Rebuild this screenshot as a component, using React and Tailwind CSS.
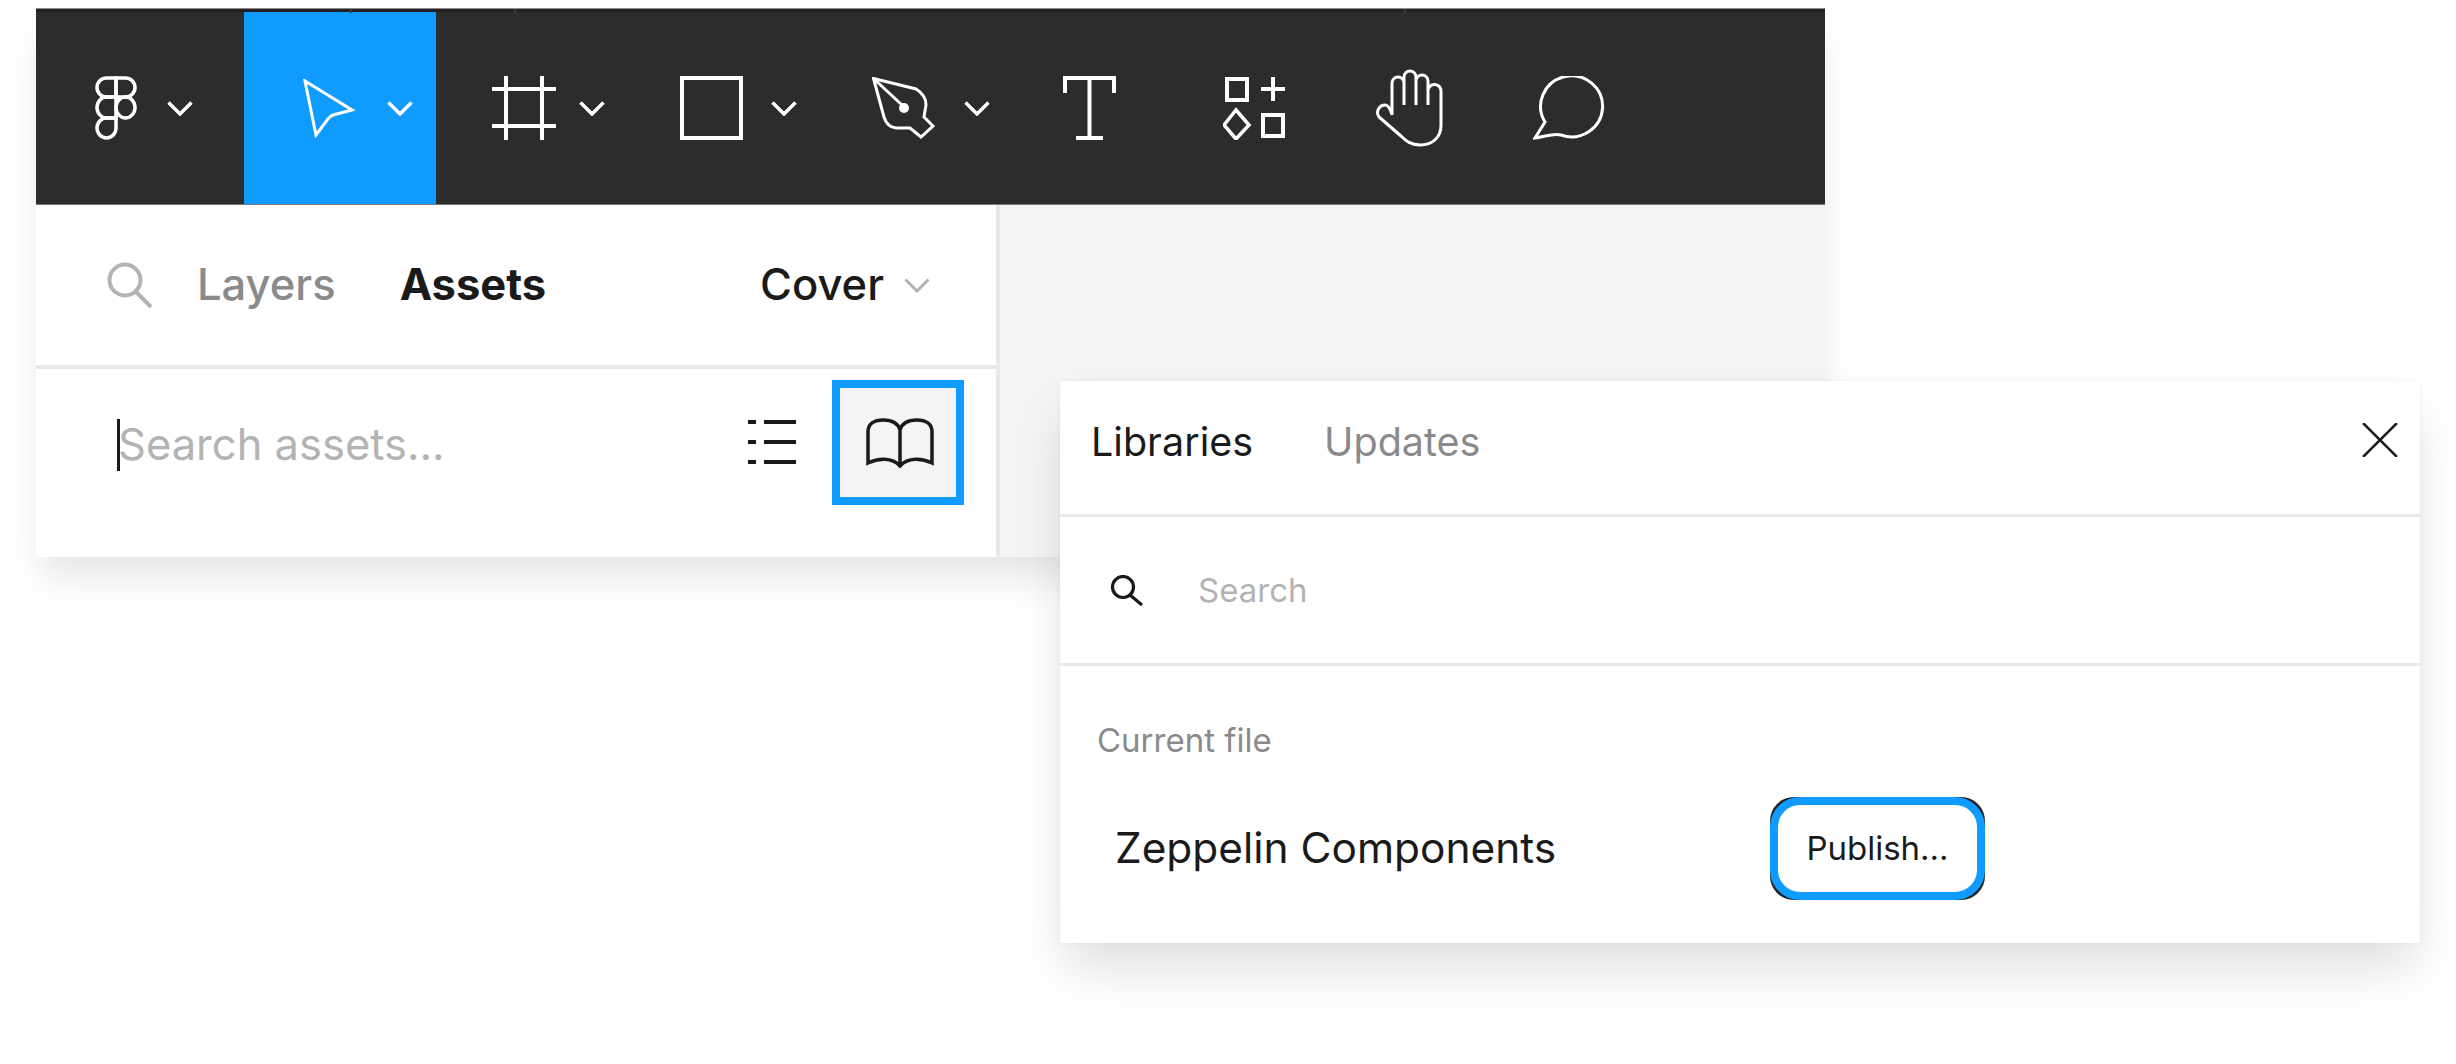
const Chevron = ({ color = 'white', w = 26, h = 15, sw = 3.5 }) => (
  <svg width={w} height={h} viewBox="0 0 26 15" fill="none" stroke={color} strokeWidth={sw} className="shrink-0">
    <path d="M1.5 1.5 L13 13 L24.5 1.5" />
  </svg>
);

const FigmaLogo = () => (
  <svg width="42" height="64" viewBox="0 0 42 64" fill="none" stroke="white" strokeWidth="3.5" className="shrink-0">
    <path d="M21 2 H11.5 a9.5 9.5 0 0 0 0 19 H21 Z" />
    <path d="M21 2 H30.5 a9.5 9.5 0 0 1 0 19 H21 Z" />
    <path d="M21 21 H11.5 a9.5 10.5 0 0 0 0 21 H21 Z" />
    <ellipse cx="30.5" cy="31.5" rx="9.5" ry="10.5" />
    <path d="M21 42 H11.5 a9.5 10 0 1 0 9.5 10 Z" />
  </svg>
);

const Cursor = () => (
  <svg width="52" height="59" viewBox="0 0 52 59" fill="none" stroke="white" strokeWidth="3" className="shrink-0">
    <path d="M2 2 L49 31 L30 36 Q27 37 25 40 L13 56 Z" strokeLinejoin="miter" />
  </svg>
);

const FrameIcon = () => (
  <svg width="64" height="64" viewBox="0 0 64 64" fill="none" stroke="white" strokeWidth="4" className="shrink-0">
    <path d="M14 0 V64 M50 0 V64 M0 13 H64 M0 50 H64" />
  </svg>
);

const Pen = () => (
  <svg width="63" height="63" viewBox="0 0 63 63" fill="none" stroke="white" strokeWidth="3" className="shrink-0">
    <path d="M1.5 1.5 L44 12 Q54 18 54 28 L52 40 L61 49 L49 60 L38 51 L24 51 Q15 50 12 40 Z" />
    <path d="M1.5 1.5 L30 28" />
    <circle cx="32" cy="31" r="5" fill="white" stroke="none" />
  </svg>
);

const TextIcon = () => (
  <svg width="53" height="64" viewBox="0 0 53 64" fill="none" stroke="white" strokeWidth="4" className="shrink-0">
    <path d="M2 17 V2 H51 V17 M26.5 2 V62 M13 62 H40" />
  </svg>
);

const Components = () => (
  <svg width="62" height="63" viewBox="-2 0 62 63" fill="none" stroke="white" strokeWidth="4" className="shrink-0">
    <rect x="2" y="2" width="20" height="21" />
    <path d="M48 0 V24 M36 12 H60" />
    <path d="M11 33 L24 48 L11 62 L-1 48 Z" strokeWidth="3.5" />
    <rect x="38" y="38" width="20" height="21" />
  </svg>
);

const Hand = () => (
  <svg width="68" height="78" viewBox="0 0 68 78" fill="none" stroke="white" strokeWidth="3" className="shrink-0">
    <path d="M17 46 V14 a6 6 0 0 1 12 0 V36 M29 36 V8 a6 6 0 0 1 12 0 V36 M41 36 V12 a6 6 0 0 1 12 0 V36 M53 36 V22 a6.5 6.5 0 0 1 13 0 V56 C66 68 58 76 45 76 C36 76 31 72 26 67 L4 48 C0 42 5 36 10 36 C13 36 15 38 17 46" strokeLinejoin="round" />
  </svg>
);

const Comment = () => (
  <svg width="72" height="64" viewBox="0 0 72 64" fill="none" stroke="white" strokeWidth="3" className="shrink-0">
    <path d="M2 62 L12 46 A31 30.5 0 1 1 28 59 C20 57 11 61 2 62 Z" />
  </svg>
);

export default function App() {
  return (
    <div className="relative w-[2456px] h-[1064px] overflow-hidden bg-white pt-[8px] pl-[36px] font-['Inter',sans-serif]">
      {/* main window */}
      <div className="w-[1789px] h-[549px] bg-[#f4f4f4] shadow-[0_25px_35px_-5px_rgba(0,0,0,0.1)]">
        {/* toolbar */}
        <div className="relative h-[197px] bg-[#2c2c2c] border-t border-[#8c8c8c]">
          <div className="h-[3px] bg-[#222222]" />
          <div className="absolute top-0 left-[314px] w-[2px] h-[4px] bg-[#3c3c3c]" />
          <div className="absolute top-0 left-[478px] w-[2px] h-[4px] bg-[#3c3c3c]" />
          <div className="absolute top-0 left-[1368px] w-[2px] h-[4px] bg-[#3c3c3c]" />
          <div className="flex items-center h-[192px]">
            <div className="flex items-center w-[208px] h-full pl-[59px] gap-[30px]">
              <FigmaLogo />
              <Chevron />
            </div>
            <div className="flex items-center w-[192px] h-full pl-[59px] gap-[32px] bg-[#0f9bff]">
              <Cursor />
              <Chevron />
            </div>
            <div className="flex items-center pl-[56px] gap-[23px]">
              <FrameIcon />
              <Chevron />
            </div>
            <div className="flex items-center pl-[75px] gap-[28px]">
              <div className="w-[63px] h-[64px] border-4 border-white shrink-0" />
              <Chevron />
            </div>
            <div className="flex items-center pl-[75px] gap-[29px]">
              <Pen />
              <Chevron />
            </div>
            <div className="ml-[73px]"><TextIcon /></div>
            <div className="ml-[107px]"><Components /></div>
            <div className="ml-[90px]"><Hand /></div>
            <div className="ml-[90px]"><Comment /></div>
          </div>
          <div className="absolute bottom-0 left-0 right-0 h-px bg-[#7a7a7a]" />
        </div>

        {/* left panel */}
        <div className="w-[964px] h-[352px] bg-white border-r-4 border-[#e8e8e8]">
          <div className="flex items-center h-[160px] pl-[71px] pr-[66px] border-b-4 border-[#e8e8e8] box-content">
            <svg width="46" height="46" viewBox="0 0 46 46" fill="none" stroke="#b3b3b3" strokeWidth="4" className="shrink-0">
              <circle cx="18" cy="18" r="15.5" />
              <path d="M29 30 L44 45" />
            </svg>
            <span className="ml-[44px] text-[43.5px] font-medium text-[#8a8a8a] leading-none">Layers</span>
            <span className="ml-[64px] text-[43.5px] font-bold text-[#1a1a1a] leading-none">Assets</span>
            <span className="ml-auto text-[43.5px] font-medium text-[#1a1a1a] leading-none">Cover</span>
            <div className="ml-[20px]"><Chevron color="#b3b3b3" sw={3} /></div>
          </div>
          <div className="flex items-start pl-[81px] pr-[32px] pt-[11px]">
            <div className="flex items-center h-[125px] mt-[2px]">
              <div className="w-[3px] h-[52px] bg-[#1a1a1a]" />
              <span className="-ml-[2px] text-[43.5px] text-[#b3b3b3] leading-none">Search assets...</span>
            </div>
            <div className="ml-auto mt-[40px] flex flex-col gap-[16px] w-[48px]">
              <div className="flex gap-[8px]"><div className="w-[8px] h-[4px] bg-[#1a1a1a]" /><div className="w-[32px] h-[4px] bg-[#1a1a1a]" /></div>
              <div className="flex gap-[8px]"><div className="w-[8px] h-[4px] bg-[#1a1a1a]" /><div className="w-[32px] h-[4px] bg-[#1a1a1a]" /></div>
              <div className="flex gap-[8px]"><div className="w-[8px] h-[4px] bg-[#1a1a1a]" /><div className="w-[32px] h-[4px] bg-[#1a1a1a]" /></div>
            </div>
            <div className="ml-[36px] flex items-center justify-center w-[132px] h-[125px] bg-[#f4f4f4] border-8 border-[#0f9bff]">
              <svg width="68" height="50" viewBox="0 0 68 50" fill="none" stroke="#1a1a1a" strokeWidth="3.5" className="ml-[3px]">
                <path d="M34 48 V12 C32 5 25 2 17 2 C8 2 2 6 2 14 V45 C12 40 26 39 34 48 C42 39 56 40 66 45 V14 C66 6 60 2 51 2 C43 2 36 5 34 12" />
              </svg>
            </div>
          </div>
        </div>
      </div>

      {/* libraries modal */}
      <div className="absolute left-[1060px] top-[381px] w-[1360px] h-[562px] bg-white shadow-[0_30px_50px_-5px_rgba(0,0,0,0.13),0_0_6px_rgba(0,0,0,0.05)]">
        <div className="flex items-center h-[136px] pl-[31px] pr-[22px] pb-[9px] border-b-[3px] border-[#e8e8e8]">
          <span className="text-[39.5px] text-[#1a1a1a] leading-none">Libraries</span>
          <span className="ml-[71px] text-[39.5px] text-[#8a8a8a] leading-none">Updates</span>
          <svg width="36" height="34" viewBox="0 0 36 34" fill="none" stroke="#1a1a1a" strokeWidth="2.5" className="ml-auto -mt-[6px]">
            <path d="M1 0 L35 34 M35 0 L1 34" />
          </svg>
        </div>
        <div className="flex items-center h-[149px] pl-[50px] border-b-[3px] border-[#e8e8e8]">
          <svg width="33" height="31" viewBox="0 0 33 31" fill="none" stroke="#1a1a1a" strokeWidth="3.2">
            <circle cx="13" cy="12" r="10.5" />
            <path d="M20 20 L32 30" />
          </svg>
          <span className="ml-[55px] text-[33px] text-[#b3b3b3] leading-none">Search</span>
        </div>
        <div className="pl-[37px] pt-[58px]">
          <div className="text-[33px] text-[#8a8a8a] leading-none">Current file</div>
          <div className="flex items-center mt-[40px] pl-[18px]">
            <span className="w-[655px] text-[42.4px] text-[#1a1a1a] leading-none">Zeppelin Components</span>
            <div className="relative w-[215px] h-[103px] rounded-[24px] bg-[#222222]">
              <div className="absolute inset-0 flex items-center justify-center rounded-[30px] border-8 border-[#0f9bff] bg-white text-[33px] text-[#1a1a1a] leading-none">
                Publish...
              </div>
            </div>
          </div>
        </div>
      </div>
    </div>
  );
}
